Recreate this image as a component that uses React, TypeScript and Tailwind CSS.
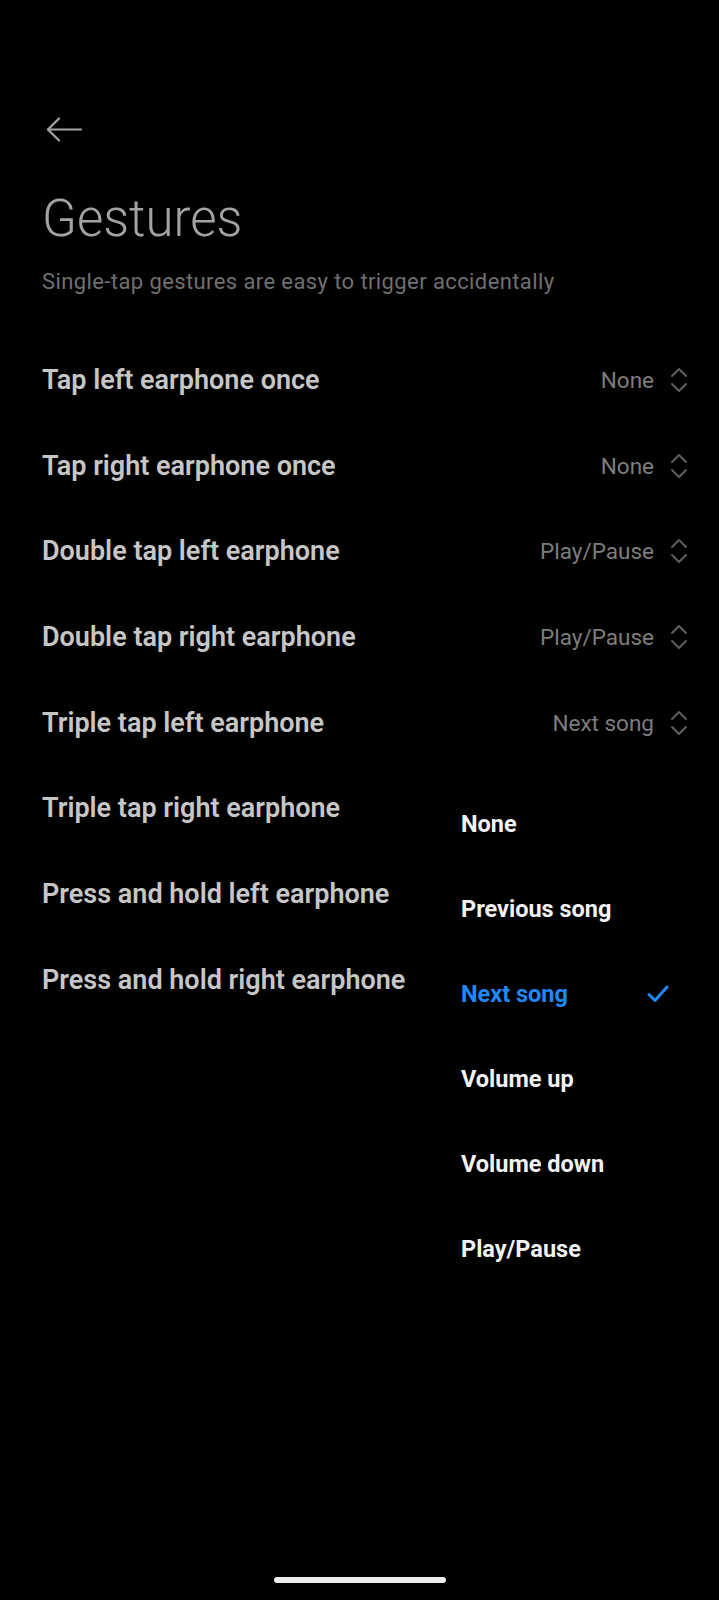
import React from "react";

const rows = [
  { label: "Tap left earphone once", value: "None" },
  { label: "Tap right earphone once", value: "None" },
  { label: "Double tap left earphone", value: "Play/Pause" },
  { label: "Double tap right earphone", value: "Play/Pause" },
  { label: "Triple tap left earphone", value: "Next song" },
  { label: "Triple tap right earphone", value: "Next song" },
  { label: "Press and hold left earphone", value: "None" },
  { label: "Press and hold right earphone", value: "None" },
];

const options = ["None", "Previous song", "Next song", "Volume up", "Volume down", "Play/Pause"];
const selected = "Next song";

const Updown = () => (
  <svg width="18" height="26" viewBox="0 0 18 26" fill="none" stroke="#5e5e5e" strokeWidth="2" strokeLinecap="round" strokeLinejoin="round">
    <path d="M2 9 L9 2 L16 9" />
    <path d="M2 17 L9 24 L16 17" />
  </svg>
);

const App = () => {
  return (
    <div
      className="relative flex h-[1600px] w-full flex-col overflow-hidden bg-black"
      style={{ fontFamily: "Roboto, 'Noto Sans', sans-serif" }}
    >
      <div className="flex flex-col pl-[42px] pr-[31px]">
        <div className="pt-[117px]">
          <svg width="41" height="25" viewBox="0 0 41 25" fill="none" stroke="#a6a6a6" strokeWidth="2.2" strokeLinecap="round" strokeLinejoin="round">
            <path d="M39 12.5 H6" />
            <path d="M17 1.5 L6 12.5 L17 23.5" />
          </svg>
        </div>

        <h1 className="mt-[47px] text-[51px] leading-[60px] font-light text-[#a3a3a3]">Gestures</h1>
        <p className="mt-[19px] text-[22px] leading-[28px] tracking-[0.4px] text-[#707070]">
          Single-tap gestures are easy to trigger accidentally
        </p>

        <div className="mt-[41px] flex flex-col">
          {rows.map((row) => (
            <div key={row.label} className="flex h-[85.7px] items-center justify-between">
              <span className="text-[27px] leading-[30px] font-semibold text-[#c6c6c6]">{row.label}</span>
              <div className="flex items-center gap-[16px]">
                <span className="text-[22.5px] leading-[28px] text-[#7d7d7d]">{row.value}</span>
                <Updown />
              </div>
            </div>
          ))}
        </div>
      </div>

      {/* popup list */}
      <div className="absolute top-[760px] right-0 flex w-[300px] flex-col bg-black py-[21px]">
        {options.map((opt) => (
          <div key={opt} className="flex h-[85px] items-center justify-between pl-[42px] pr-[50px]">
            <span
              className={
                opt === selected
                  ? "text-[23.5px] leading-[28px] font-bold text-[#1e88f5]"
                  : "text-[23.5px] leading-[28px] font-bold text-[#f2f2f2]"
              }
            >
              {opt}
            </span>
            {opt === selected && (
              <svg width="22" height="18" viewBox="0 0 22 18" fill="none" stroke="#1e88f5" strokeWidth="3" strokeLinecap="round" strokeLinejoin="round">
                <path d="M2 9.5 L8 15.5 L20 2" />
              </svg>
            )}
          </div>
        ))}
      </div>

      <div className="flex-1" />
      <div className="mb-[17px] flex justify-center">
        <div className="h-[6px] w-[172px] rounded-full bg-[#ececec]" />
      </div>
    </div>
  );
};

export default App;
